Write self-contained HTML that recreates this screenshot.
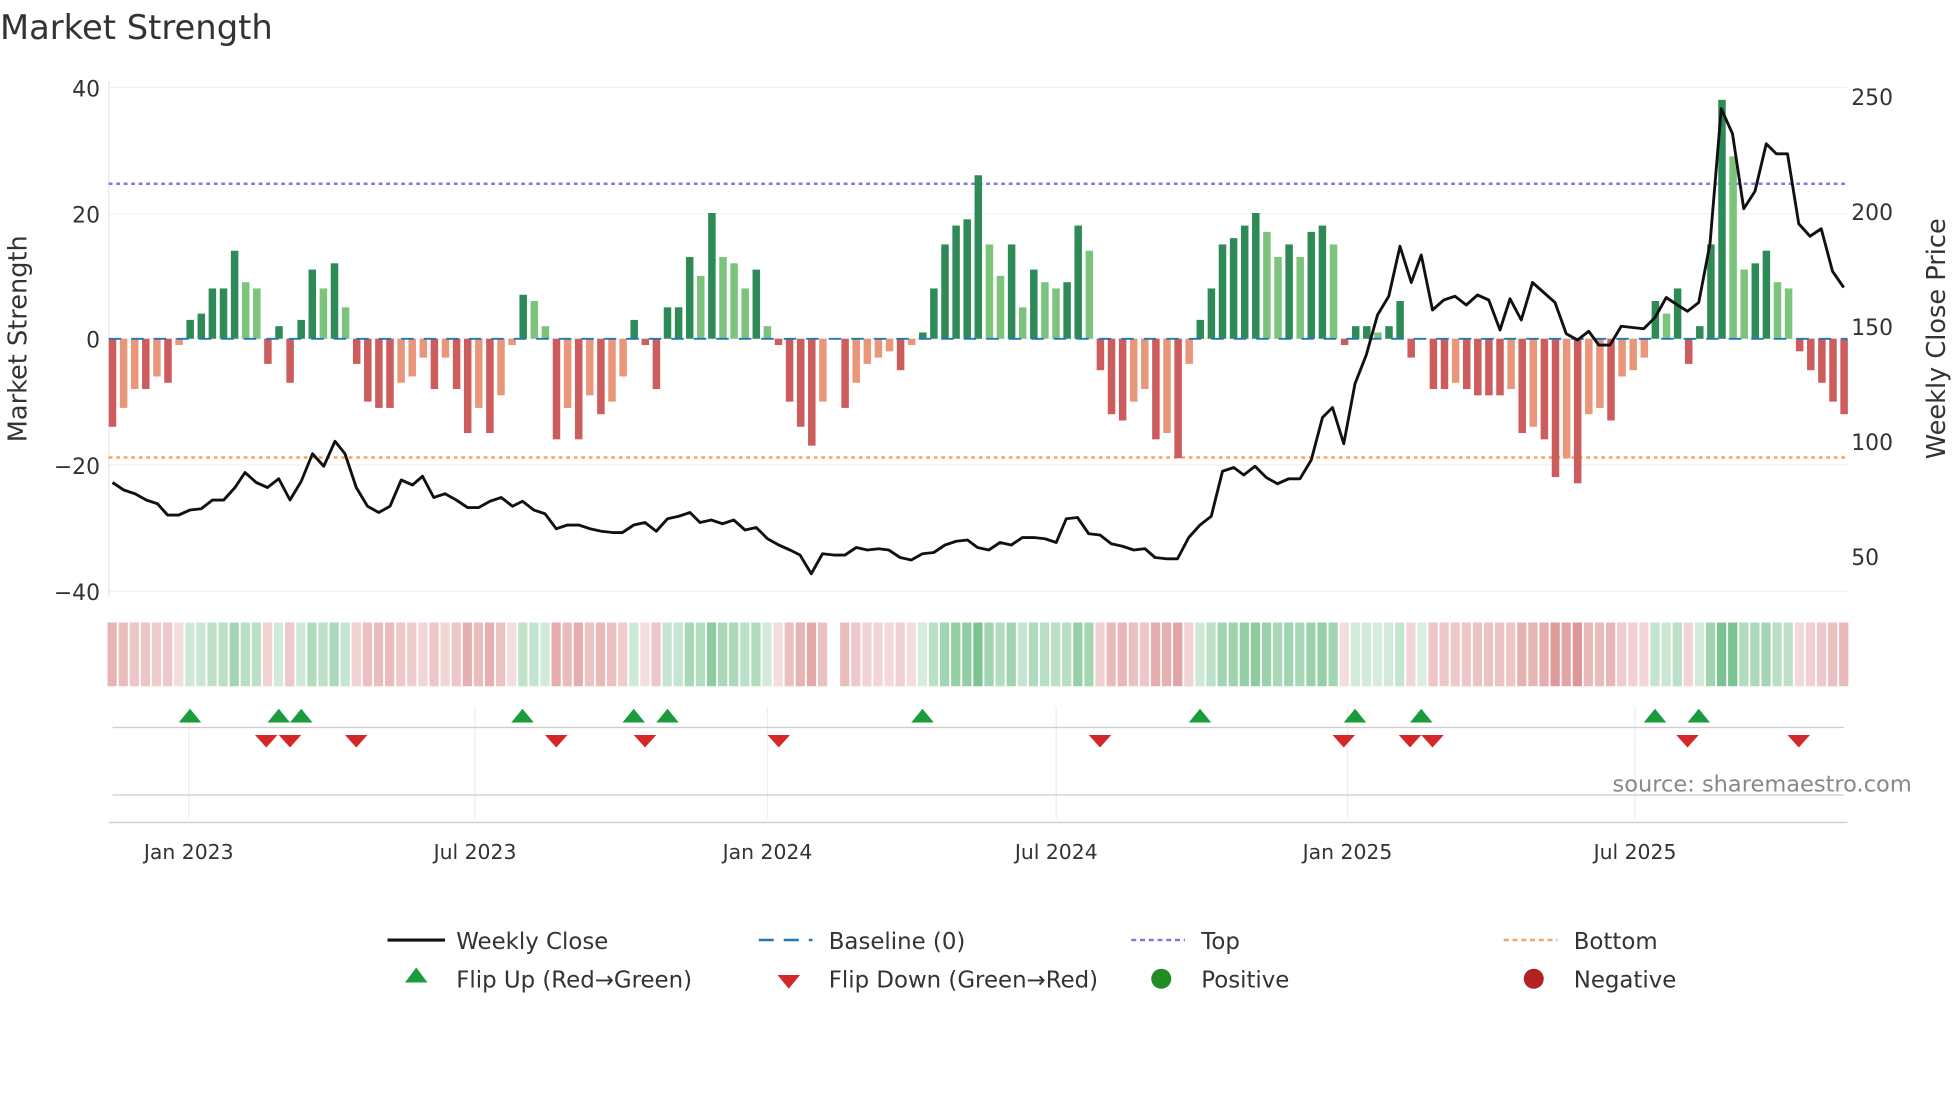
<!DOCTYPE html>
<html><head><meta charset="utf-8"><style>
html,body{margin:0;padding:0;background:#fff;width:1960px;height:1102px;overflow:hidden}
svg{display:block}
text{font-family:"DejaVu Sans","Liberation Sans",sans-serif;fill:#333}
</style></head><body>
<svg id="s" width="1960" height="1102" viewBox="0 0 1568 881.6" xmlns="http://www.w3.org/2000/svg">
<text x="0" y="31" font-size="27" fill="#333">Market Strength</text>
<text x="80" y="77" font-size="17.5" text-anchor="end">40</text>
<text x="80" y="178" font-size="17.5" text-anchor="end">20</text>
<text x="80" y="278" font-size="17.5" text-anchor="end">0</text>
<text x="80" y="480" font-size="17.5" text-anchor="end">−40</text>
<text x="80" y="379" font-size="17.5" text-anchor="end">−20</text>
<text x="1481" y="84" font-size="17.5">250</text>
<text x="1481" y="176" font-size="17.5">200</text>
<text x="1481" y="268" font-size="17.5">150</text>
<text x="1481" y="360" font-size="17.5">100</text>
<text x="1481" y="452" font-size="17.5">50</text>
<text transform="translate(21,271) rotate(-90)" font-size="20.5" text-anchor="middle">Market Strength</text>
<text transform="translate(1556,271) rotate(-90)" font-size="20.5" text-anchor="middle">Weekly Close Price</text>
<g id="g"></g>
<text x="1290" y="633" font-size="18" style="fill:#888">source: sharemaestro.com</text>
<g font-size="16.3">
<text x="151" y="687" text-anchor="middle">Jan 2023</text>
<text x="380" y="687" text-anchor="middle">Jul 2023</text>
<text x="614" y="687" text-anchor="middle">Jan 2024</text>
<text x="845" y="687" text-anchor="middle">Jul 2024</text>
<text x="1078" y="687" text-anchor="middle">Jan 2025</text>
<text x="1308" y="687" text-anchor="middle">Jul 2025</text>
</g>
<g font-size="18.3">
<line x1="310" y1="752" x2="356" y2="752" stroke="#111" stroke-width="2.5"/><text x="365" y="759">Weekly Close</text>
<line x1="607" y1="752" x2="650" y2="752" stroke="#1f77b4" stroke-width="2" stroke-dasharray="12,8"/><text x="663" y="759">Baseline (0)</text>
<line x1="905" y1="752" x2="948" y2="752" stroke="#9370db" stroke-width="2" stroke-dasharray="4,3"/><text x="961" y="759">Top</text>
<line x1="1203" y1="752" x2="1246" y2="752" stroke="#f4a460" stroke-width="2" stroke-dasharray="4,3"/><text x="1259" y="759">Bottom</text>
<polygon points="333,774 342,786 324,786" fill="#1a9b3c"/><text x="365" y="790">Flip Up (Red→Green)</text>
<polygon points="622,780 640,780 631,791" fill="#d62728"/><text x="663" y="790">Flip Down (Green→Red)</text>
<circle cx="929" cy="783" r="8" fill="#228b22"/><text x="961" y="790">Positive</text>
<circle cx="1227" cy="783" r="8" fill="#b22222"/><text x="1259" y="790">Negative</text>
</g>
</svg>
<script>
var v=[-14,-11,-8,-8,-6,-7,-1,3,4,8,8,14,9,8,-4,2,-7,3,11,8,12,5,-4,-10,-11,-11,-7,-6,-3,-8,-3,-8,-15,-11,-15,-9,-1,7,6,2,-16,-11,-16,-9,-12,-10,-6,3,-1,-8,5,5,13,10,20,13,12,8,11,2,-1,-10,-14,-17,-10,0,-11,-7,-4,-3,-2,-5,-1,1,8,15,18,19,26,15,10,15,5,11,9,8,9,18,14,-5,-12,-13,-10,-8,-16,-15,-19,-4,3,8,15,16,18,20,17,13,15,13,17,18,15,-1,2,2,1,2,6,-3,0,-8,-8,-7,-8,-9,-9,-9,-8,-15,-14,-16,-22,-19,-23,-12,-11,-13,-6,-5,-3,6,4,8,-4,2,15,38,29,11,12,14,9,8,-2,-5,-7,-10,-12];
var p=[[90,386],[99,392],[108,395],[117,400],[126,403],[134,412],[143,412],[152,408],[161,407],[170,400],[179,400],[188,390],[196,378],[205,386],[214,390],[223,383],[232,400],[241,385],[250,363],[259,373],[268,353],[276,363],[285,390],[294,405],[303,410],[312,405],[321,384],[330,388],[338,381],[347,398],[356,395],[365,400],[374,406],[383,406],[392,401],[401,398],[410,405],[418,401],[427,408],[436,411],[445,423],[454,420],[463,420],[472,423],[481,425],[490,426],[498,426],[507,420],[516,418],[525,425],[534,415],[543,413],[552,410],[560,418],[569,416],[578,419],[587,416],[596,424],[605,422],[614,431],[623,436],[632,440],[640,444],[649,459],[658,443],[667,444],[676,444],[685,438],[694,440],[703,439],[711,440],[720,446],[729,448],[738,443],[747,442],[756,436],[765,433],[774,432],[782,438],[791,440],[800,434],[809,436],[818,430],[827,430],[836,431],[845,434],[853,415],[862,414],[871,427],[880,428],[889,435],[898,437],[907,440],[916,439],[924,446],[933,447],[942,447],[951,430],[960,420],[969,413],[978,377],[987,374],[995,380],[1004,373],[1013,382],[1022,387],[1031,383],[1040,383],[1049,368],[1058,334],[1066,326],[1075,355],[1084,307],[1093,284],[1102,252],[1111,237],[1120,197],[1129,226],[1137,204],[1146,248],[1155,240],[1164,237],[1173,244],[1182,236],[1191,240],[1200,264],[1208,239],[1217,256],[1226,226],[1235,234],[1244,242],[1253,267],[1262,272],[1271,265],[1279,276],[1288,276],[1297,261],[1306,262],[1315,263],[1324,254],[1333,238],[1342,244],[1350,249],[1359,242],[1368,195],[1377,87],[1386,107],[1395,167],[1404,153],[1413,115],[1421,123],[1430,123],[1439,179],[1448,189],[1457,183],[1466,217],[1475,230]];
var h='';
[70,171,271,372,473].forEach(function(y){h+='<line x1="87" x2="1478" y1="'+y+'" y2="'+y+'" stroke="#eef0f4" stroke-width="1"/>';});
h+='<line x1="87" x2="87" y1="65" y2="478" stroke="#e6e9f0"/>';
[151,380,614,845,1078,1308].forEach(function(x){h+='<line x1="'+x+'" x2="'+x+'" y1="565" y2="655" stroke="#eee"/>';});
h+='<line x1="90" x2="1475" y1="582" y2="582" stroke="#ccc"/><line x1="90" x2="1475" y1="636" y2="636" stroke="#ccc"/><line x1="87" x2="1478" y1="658" y2="658" stroke="#ccc"/>';
h+='<line x1="87" x2="1478" y1="147" y2="147" stroke="#9370db" stroke-width="2" stroke-dasharray="3,3"/>';
h+='<line x1="87" x2="1478" y1="366" y2="366" stroke="#f4a460" stroke-width="2" stroke-dasharray="3,3"/>';
var sc=5.03,z=271;
for(var i=0;i<v.length;i++){
 var x=90+i*8.88,a=v[i],pr=i?v[i-1]:0,c;
 if(a>=0)c=(a>=pr)?'#2e8b57':'#7cc47c';else c=(a<=pr)?'#cd5c5c':'#e9967a';
 var y=a>=0?z-a*sc:z,hh=Math.abs(a)*sc;
 if(a!==0)h+='<rect x="'+(x-3)+'" y="'+y+'" width="6" height="'+hh+'" fill="'+c+'"/>';
 if(i==65)continue;
 var t=Math.min(Math.abs(a)/25,1),o=0.18+0.45*t;
 var hc=a>=0?'rgba(46,160,80,'+o+')':'rgba(200,80,80,'+o+')';
 h+='<rect x="'+(x-4)+'" y="498" width="7.4" height="51" fill="'+hc+'"/>';
}
h+='<line x1="87" x2="1478" y1="271" y2="271" stroke="#1f77b4" stroke-width="1.5" stroke-dasharray="10,8"/>';
h+='<polyline fill="none" stroke="#111" stroke-width="2.3" stroke-linejoin="round" points="'+p.map(function(q){return q.join(',')}).join(' ')+'"/>';
[152,223,241,418,507,534,738,960,1084,1137,1324,1359].forEach(function(x){h+='<polygon points="'+x+',567 '+(x+9)+',578 '+(x-9)+',578" fill="#1a9b3c"/>';});
[213,232,285,445,516,623,880,1075,1128,1146,1350,1439].forEach(function(x){h+='<polygon points="'+(x-9)+',588 '+(x+9)+',588 '+x+',598" fill="#d62728"/>';});
document.getElementById('g').innerHTML=h;
</script>
</body></html>
